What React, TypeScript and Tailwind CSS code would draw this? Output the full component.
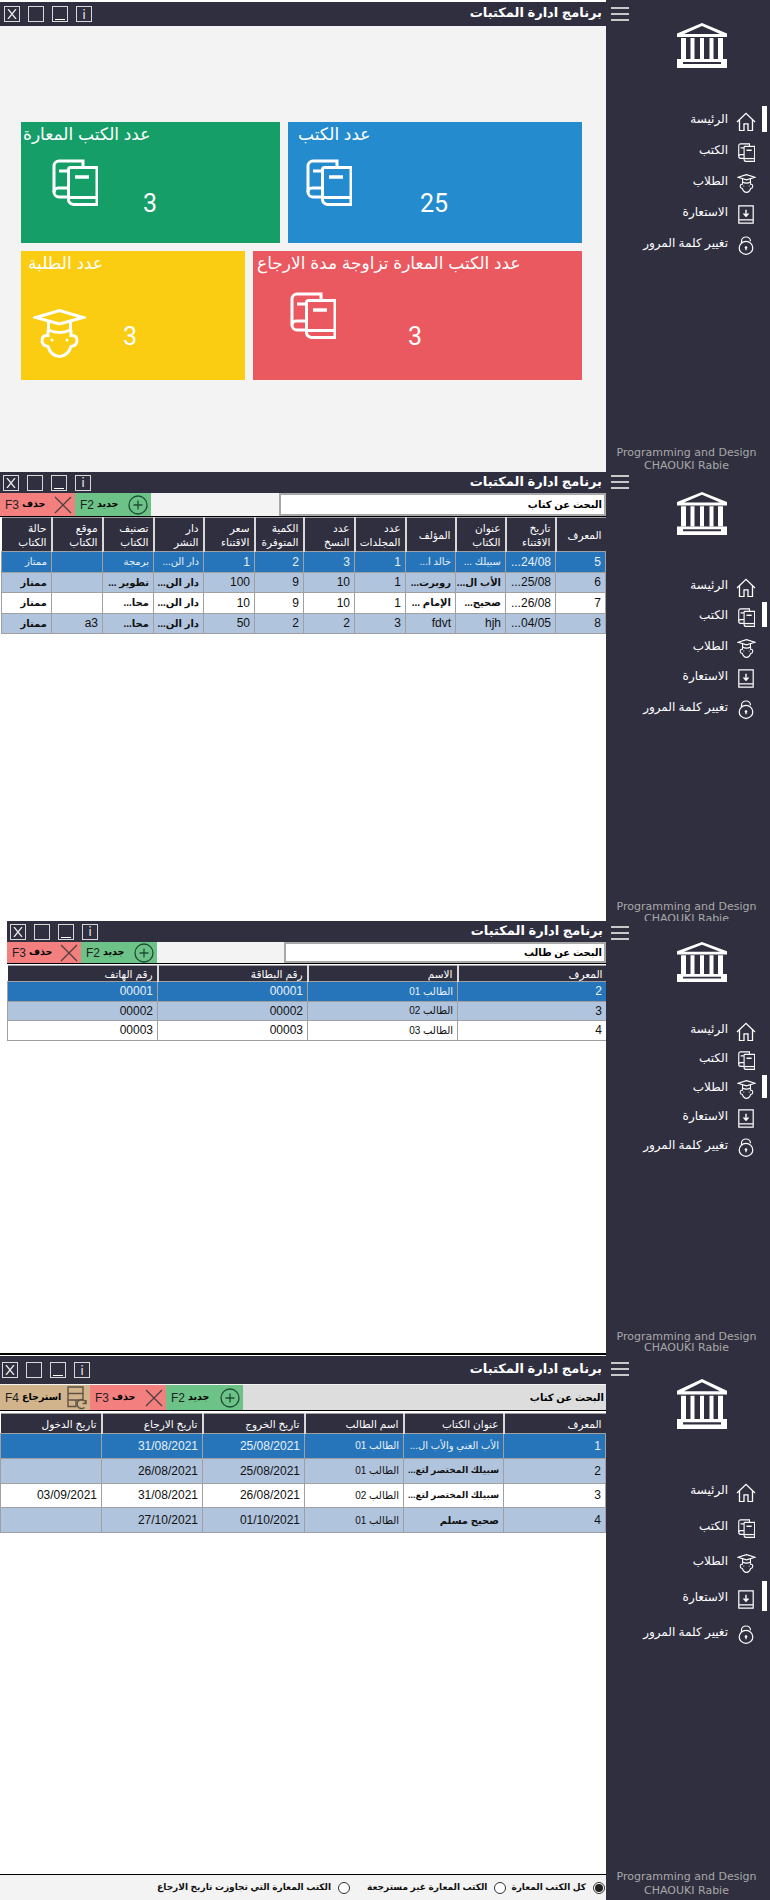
import type { ReactNode } from 'react';

const FONT = "font-['Liberation_Sans','DejaVu_Sans',sans-serif]";

const NAV = [
  { label: 'الرئيسة', icon: <HomeIcon /> },
  { label: 'الكتب', icon: <BooksIcon className="w-[17px] h-full" /> },
  { label: 'الطلاب', icon: <StudentIcon className="w-[19px] h-full" /> },
  { label: 'الاستعارة', icon: <LoanIcon /> },
  { label: 'تغيير كلمة المرور', icon: <LockIcon /> },
];

function BooksIcon({ className = '' }: { className?: string }) {
  return (
    <svg viewBox="0 0 46 47" preserveAspectRatio="none" fill="none" stroke="currentColor" strokeWidth="3" className={className}>
      <path d="M31 8V2H7a5 5 0 0 0-5 5v26a5 5 0 0 0 5 5h9" />
      <path d="M2 33a4 4 0 0 1 4-4h10M7 12h9" />
      <path d="M45 8.500H18.500a2 2 0 0 0-2 2V40a5 5 0 0 0 5 5.500H45z" />
      <path d="M17 38.500h28" />
      <path d="M23 18h14" strokeWidth="3.500" />
    </svg>
  );
}

function StudentIcon({ className = '' }: { className?: string }) {
  return (
    <svg viewBox="0 0 53 49" preserveAspectRatio="none" fill="none" stroke="currentColor" strokeWidth="3" className={className}>
      <path d="M3 8.500 26.500 1.500 50 8.500 26.500 15z" />
      <path d="M15.500 11.500V21q11 5 22 0v-9.500" />
      <path d="M15 21v5.500q-6-.5-6 5 0 5 6 6Q18 47 26.500 47.500 35 47 38 37.500q6-1 6-6 0-5.500-6-5V21" />
      <circle cx="19" cy="31" r="1.500" fill="currentColor" stroke="none" />
      <circle cx="34" cy="31" r="1.500" fill="currentColor" stroke="none" />
    </svg>
  );
}

function HomeIcon() {
  return (
    <svg viewBox="0 0 20 20" preserveAspectRatio="none" fill="none" stroke="currentColor" strokeWidth="1.300" className="w-[20px] h-full">
      <path d="M1 10.500 10 1.500l9 9" />
      <path d="M3.500 8.500V19.500H8v-7h4v7h4.500V8.500" />
    </svg>
  );
}

function LoanIcon() {
  return (
    <svg viewBox="0 0 16 18" preserveAspectRatio="none" fill="none" stroke="currentColor" strokeWidth="1.200" className="w-[16px] h-full">
      <path d="M.800.800h14.400v16.400H.800zM.800 14h14.400" />
      <path d="M8 4.500V10M5.500 8 8 10.500 10.500 8" strokeWidth="1.400" />
    </svg>
  );
}

function LockIcon() {
  return (
    <svg viewBox="0 0 16 20" preserveAspectRatio="none" fill="none" stroke="currentColor" strokeWidth="1.200" className="w-[16px] h-full">
      <circle cx="8" cy="12.500" r="6.800" />
      <path d="M3.500 7.500V5.500a4.500 4.500 0 0 1 9 0" />
      <circle cx="8" cy="12" r="1.300" fill="currentColor" stroke="none" />
      <path d="M8 12v3" />
    </svg>
  );
}

function BankLogo({ className }: { className: string }) {
  return (
    <svg viewBox="0 0 50 45" preserveAspectRatio="none" fill="#ffffff" className={className}>
      <path d="M25 0 50 10.500V14H0v-3.500zM25 3 7 11h36z" fillRule="evenodd" />
      <path d="M4 15h5v21H4zM13.500 15h4v21h-4zM23 15h4v21h-4zM32.500 15h4v21h-4zM41 15h5v21h-5z" />
      <path d="M0 36h50v9H0zM6 39v2h38v-2z" fillRule="evenodd" />
    </svg>
  );
}

function Sidebar({ active, hamburger, logo, nav, row, bar, footer }: {
  active: number;
  hamburger: string;
  logo: string;
  nav: string;
  row: string;
  bar: string;
  footer: string;
}) {
  return (
    <aside className={`flex-1 flex flex-col overflow-hidden bg-[#302f3f] text-white ${hamburger}`}>
      <div className="ml-[5px] w-[18px] flex-none flex flex-col justify-between h-[14px]">
        <span className="h-[2px] bg-[#c8c8c8]" />
        <span className="h-[2px] bg-[#c8c8c8]" />
        <span className="h-[2px] bg-[#c8c8c8]" />
      </div>
      <BankLogo className={`ml-[71px] w-[50px] flex-none ${logo}`} />
      <nav className={`flex flex-col flex-none ${nav}`}>
        {NAV.map((item, i) => (
          <div key={item.label} className={`flex items-center justify-end pr-[3px] ${row}`}>
            <span dir="rtl" className="text-[12px] leading-none mr-[7px] -mt-[5px] whitespace-nowrap">{item.label}</span>
            <span className="w-[22px] h-[19px] flex justify-center">{item.icon}</span>
            <span className={`ml-[5px] w-[5px] -mt-[6px] ${bar} ${i === active ? 'bg-white' : 'bg-transparent'}`} />
          </div>
        ))}
      </nav>
      <div className={`mt-auto flex-none text-center font-['DejaVu_Sans',sans-serif] text-[11px] text-[#a8a8a8] pr-[3px] ${footer}`}>
        <div>Programming and Design</div>
        <div>CHAOUKI Rabie</div>
      </div>
    </aside>
  );
}

function WindowButton({ children }: { children?: ReactNode }) {
  return (
    <div className="w-[16px] h-[16px] border border-[#d8d8d8] flex items-center justify-center text-[#e8e8e8]">
      {children}
    </div>
  );
}

function TitleBar({ className }: { className: string }) {
  return (
    <header className={`flex items-center justify-between flex-none bg-[#302f3f] ${className}`}>
      <div className="flex gap-[8px]">
        <WindowButton>
          <svg viewBox="0 0 10 10" fill="none" stroke="currentColor" strokeWidth="1.300" className="w-[10px] h-[10px]">
            <path d="m1 0 8 10M9 0 1 10" />
          </svg>
        </WindowButton>
        <WindowButton />
        <WindowButton>
          <span className="mt-[11px] w-[10px] h-[1px] bg-white" />
        </WindowButton>
        <WindowButton>
          <span className="text-[13px] leading-none font-['DejaVu_Sans',sans-serif]">i</span>
        </WindowButton>
      </div>
      <h1 dir="rtl" className="text-[13px] font-bold leading-none text-white whitespace-nowrap -mt-[3px]">برنامج ادارة المكتبات</h1>
    </header>
  );
}

function ToolButton({ label, keyName, className, children }: { label: string; keyName: string; className: string; children: ReactNode }) {
  return (
    <div className={`flex items-center justify-between pl-[5px] pr-[3px] h-full flex-none ${className}`}>
      <span className="flex items-center gap-[3px] whitespace-nowrap">
        <span className="text-[12px] text-[#1f1f1f]">{keyName}</span>
        <span className="text-[9.500px] font-bold text-black">{label}</span>
      </span>
      {children}
    </div>
  );
}

const AddIcon = () => (
  <svg viewBox="0 0 20 20" fill="none" stroke="#1d4d35" strokeWidth="1.300" className="w-[20px] h-[20px]">
    <circle cx="10" cy="10" r="9" />
    <path d="M10 5.500v9M5.500 10h9" />
  </svg>
);

const RemoveIcon = () => (
  <svg viewBox="0 0 18 18" fill="none" stroke="#4d4040" strokeWidth="1.300" className="w-[18px] h-[18px]">
    <path d="m1 1 16 16M17 1 1 17" />
  </svg>
);

const RestoreIcon = () => (
  <svg viewBox="0 0 20 24" fill="none" stroke="#5d5344" strokeWidth="1.400" className="w-[20px] h-[24px] flex-none">
    <path d="M1 1h15v6.500H1zM1 7.500h15V14H1zM1 14h8v6.500H1z" />
    <path d="M19 17a4.500 4.500 0 1 0-1.500 4.500M19 14v3.500h-3.500" />
  </svg>
);

function Search({ text, className }: { text: string; className: string }) {
  return (
    <div dir="rtl" className={`flex items-center pr-[2px] text-[10px] font-bold text-black whitespace-nowrap h-full ${className}`}>
      {text}
    </div>
  );
}

type Column = { title: ReactNode; width: string };

const ROW_STYLES = [
  'bg-[#2675ba] text-[#e8f0f8]',
  'bg-[#b0c4de] text-[#111111]',
  'bg-white text-[#111111]',
  'bg-[#b0c4de] text-[#111111]',
];

const ARABIC = /[\u0600-\u06FF]/;

function cellText(cell: string, row: number) {
  if (!ARABIC.test(cell)) return 'text-[12px]';
  if (/\d/.test(cell)) return 'text-[10px]';
  if (row === 0) return 'text-[10px]';
  return cell.length > 14 ? 'text-[9px] font-bold' : 'text-[10px] font-bold';
}

function DataTable({ columns, rows, headClass, rowClass }: {
  columns: Column[];
  rows: string[][];
  headClass: string;
  rowClass: string;
}) {
  return (
    <table dir="rtl" className="table-fixed border-collapse w-full">
      <colgroup>
        {columns.map((c, i) => <col key={i} className={c.width} />)}
      </colgroup>
      <thead>
        <tr className={`bg-[#302f3f] text-white ${headClass}`}>
          {columns.map((c, i) => (
            <th key={i} className="border-l-2 border-l-[#d8d8d8] last:border-l-0 border-y border-y-[#a0a0a0] font-normal text-right pr-[4px] text-[10.500px] leading-[14px] whitespace-nowrap overflow-hidden">
              {c.title}
            </th>
          ))}
        </tr>
      </thead>
      <tbody>
        {rows.map((row, r) => (
          <tr key={r} className={`${ROW_STYLES[r]} ${rowClass}`}>
            {row.map((cell, c) => (
              <td key={c} className={`border border-[#a0a0a0] px-[4px] text-right overflow-hidden whitespace-nowrap ${cellText(cell, r)}`}>
                {cell}
              </td>
            ))}
          </tr>
        ))}
      </tbody>
    </table>
  );
}

function StatCard({ title, titleClass, className, children }: { title: string; titleClass: string; className: string; children: ReactNode }) {
  return (
    <section className={`flex flex-col flex-none text-white ${className}`}>
      <h2 dir="rtl" className={`text-[17px] font-normal leading-[24px] w-max ${titleClass}`}>{title}</h2>
      {children}
    </section>
  );
}

function Count({ value, className }: { value: number; className: string }) {
  return <span className={`font-['Roboto',sans-serif] text-[25px] leading-[26px] ${className}`}>{value}</span>;
}

function Dashboard() {
  return (
    <div className="flex h-[472px] overflow-hidden">
      <main className="w-[606px] flex-none flex flex-col bg-[#f3f3f3]">
        <div className="h-[2px] bg-white flex-none" />
        <TitleBar className="h-[24px] pl-[4px] pr-[4px]" />
        <div className="flex flex-col gap-[8px] pt-[96px] pl-[21px]">
          <div className="flex gap-[8px]">
            <StatCard title="عدد الكتب المعارة" titleClass="ml-[2px] mt-[1px]" className="w-[259px] h-[121px] bg-[#169e68]">
              <div className="flex mt-[12px]">
                <BooksIcon className="ml-[31px] w-[46px] h-[47px]" />
                <Count value={3} className="ml-[45px] mt-[32px]" />
              </div>
            </StatCard>
            <StatCard title="عدد الكتب" titleClass="ml-[10px] mt-[1px]" className="w-[294px] h-[121px] bg-[#258bcf]">
              <div className="flex mt-[12px]">
                <BooksIcon className="ml-[18px] w-[46px] h-[47px]" />
                <Count value={25} className="ml-[68px] mt-[32px]" />
              </div>
            </StatCard>
          </div>
          <div className="flex gap-[8px]">
            <StatCard title="عدد الطلبة" titleClass="ml-[7px] mt-[1px]" className="w-[224px] h-[129px] bg-[#fbcd12]">
              <div className="flex mt-[33px]">
                <StudentIcon className="ml-[12px] w-[53px] h-[49px]" />
                <Count value={3} className="ml-[37px] mt-[15px]" />
              </div>
            </StatCard>
            <StatCard title="عدد الكتب المعارة تزاوجة مدة الارجاع" titleClass="ml-[4px] mt-[1px]" className="w-[329px] h-[129px] bg-[#ea5860]">
              <div className="flex mt-[16px]">
                <BooksIcon className="ml-[37px] w-[46px] h-[47px]" />
                <Count value={3} className="ml-[72px] mt-[32px]" />
              </div>
            </StatCard>
          </div>
        </div>
      </main>
      <Sidebar active={0} hamburger="pt-[7px]" logo="mt-[2px] h-[45px]" nav="mt-[38px]" row="h-[31px]" bar="h-[26px]" footer="leading-[13px]" />
    </div>
  );
}

const BOOK_COLUMNS: Column[] = [
  { title: 'المعرف', width: 'w-[50px]' },
  { title: <>تاريخ<br />الاقتناء</>, width: 'w-[50px]' },
  { title: <>عنوان<br />الكتاب</>, width: 'w-[50px]' },
  { title: 'المؤلف', width: 'w-[50px]' },
  { title: <>عدد<br />المجلدات</>, width: 'w-[51px]' },
  { title: <>عدد<br />النسخ</>, width: 'w-[51px]' },
  { title: <>الكمية<br />المتوفرة</>, width: 'w-[49px]' },
  { title: <>سعر<br />الاقتناء</>, width: 'w-[51px]' },
  { title: <>دار<br />النشر</>, width: 'w-[50px]' },
  { title: <>تصنيف<br />الكتاب</>, width: 'w-[51px]' },
  { title: <>موقع<br />الكتاب</>, width: 'w-[51px]' },
  { title: <>حالة<br />الكتاب</>, width: 'w-[50px]' },
];

const BOOK_ROWS = [
  ['5', '24/08...', 'سبيلك ...', 'خالد ا...', '1', '3', '2', '1', 'دار الن...', 'برمجة', '', 'ممتاز'],
  ['6', '25/08...', 'الأب ال...', 'روبرت...', '1', '10', '9', '100', 'دار الن...', 'تطوير ...', '', 'ممتاز'],
  ['7', '26/08...', 'صحيح...', 'الإمام ...', '1', '10', '9', '10', 'دار الن...', 'محا...', '', 'ممتاز'],
  ['8', '04/05...', 'hjh', 'fdvt', '3', '2', '2', '50', 'دار الن...', 'محا...', 'a3', 'ممتاز'],
];

function Books() {
  return (
    <div className="flex h-[449px] overflow-hidden">
      <main className="w-[606px] flex-none flex flex-col bg-white">
        <TitleBar className="h-[21px] pl-[3px] pr-[4px]" />
        <div className="flex h-[24px] flex-none bg-[#f3f3f3] border-b border-black">
          <ToolButton label="حذف" keyName="F3" className="w-[75px] bg-[#f47f7f]"><RemoveIcon /></ToolButton>
          <ToolButton label="جديد" keyName="F2" className="w-[76px] bg-[#6cc287]"><AddIcon /></ToolButton>
          <Search text="البحث عن كتاب" className="ml-auto w-[327px] bg-white border-2 border-[#a8a8a8]" />
        </div>
        <div className="ml-[1px] w-[603px]">
          <DataTable columns={BOOK_COLUMNS} rows={BOOK_ROWS} headClass="h-[34px]" rowClass="h-[20.500px]" />
        </div>
      </main>
      <Sidebar active={1} hamburger="pt-[3px]" logo="mt-[3px] h-[43px]" nav="mt-[37px]" row="h-[30.500px]" bar="h-[25px]" footer="leading-[11.500px] -mb-[3px]" />
    </div>
  );
}

const STUDENT_COLUMNS: Column[] = [
  { title: 'المعرف', width: 'w-[149px]' },
  { title: 'الاسم', width: 'w-[150px]' },
  { title: 'رقم البطاقة', width: 'w-[150px]' },
  { title: 'رقم الهاتف', width: 'w-[150px]' },
];

const STUDENT_ROWS = [
  ['2', 'الطالب 01', '00001', '00001'],
  ['3', 'الطالب 02', '00002', '00002'],
  ['4', 'الطالب 03', '00003', '00003'],
];

function Students() {
  return (
    <div className="flex h-[432px] overflow-hidden">
      <main className="w-[606px] flex-none flex flex-col bg-white pl-[7px]">
        <TitleBar className="h-[21px] pl-[3px] pr-[3px]" />
        <div className="flex h-[22px] flex-none bg-[#f3f3f3] border-b border-black">
          <ToolButton label="حذف" keyName="F3" className="w-[74px] bg-[#f47f7f]"><RemoveIcon /></ToolButton>
          <ToolButton label="جديد" keyName="F2" className="w-[76px] bg-[#6cc287]"><AddIcon /></ToolButton>
          <Search text="البحث عن طالب" className="ml-auto w-[322px] bg-white border-2 border-[#a8a8a8]" />
        </div>
        <div className="mt-[1px]">
          <DataTable columns={STUDENT_COLUMNS} rows={STUDENT_ROWS} headClass="h-[16px]" rowClass="h-[19.500px]" />
        </div>
      </main>
      <Sidebar active={2} hamburger="pt-[5px]" logo="mt-[2px] h-[40px]" nav="mt-[35px]" row="h-[29px]" bar="h-[23px]" footer="leading-[11px]" />
    </div>
  );
}

const LOAN_COLUMNS: Column[] = [
  { title: 'المعرف', width: 'w-[102px]' },
  { title: 'عنوان الكتاب', width: 'w-[100px]' },
  { title: 'اسم الطالب', width: 'w-[99px]' },
  { title: 'تاريخ الخروج', width: 'w-[102px]' },
  { title: 'تاريخ الارجاع', width: 'w-[101px]' },
  { title: 'تاريخ الدخول', width: 'w-[101px]' },
];

const LOAN_ROWS = [
  ['1', 'الأب الغني والأب ال...', 'الطالب 01', '25/08/2021', '31/08/2021', ''],
  ['2', 'سبيلك المختصر لتع...', 'الطالب 01', '25/08/2021', '26/08/2021', ''],
  ['3', 'سبيلك المختصر لتع...', 'الطالب 02', '26/08/2021', '31/08/2021', '03/09/2021'],
  ['4', 'صحيح مسلم', 'الطالب 01', '01/10/2021', '27/10/2021', ''],
];

const FILTERS = [
  { label: 'كل الكتب المعارة', gap: 'ml-[5px]' },
  { label: 'الكتب المعارة غير مسترجعة', gap: 'ml-[17px]' },
  { label: 'الكتب المعارة التي تجاوزت تاريخ الارجاع', gap: '' },
];

function Loans() {
  return (
    <div className="flex h-[547px] overflow-hidden">
      <main className="w-[606px] flex-none flex flex-col bg-white">
        <div className="h-[2px] bg-black flex-none" />
        <div className="h-[1px] bg-white flex-none" />
        <TitleBar className="h-[28px] pl-[2px] pr-[4px]" />
        <div className="flex h-[27px] flex-none bg-[#f3f3f3] pt-[1px] border-b border-black">
          <ToolButton label="استرجاع" keyName="F4" className="w-[90px] bg-[#d2b48c]"><RestoreIcon /></ToolButton>
          <ToolButton label="حذف" keyName="F3" className="w-[76px] bg-[#f47f7f]"><RemoveIcon /></ToolButton>
          <ToolButton label="جديد" keyName="F2" className="w-[77px] bg-[#6cc287]"><AddIcon /></ToolButton>
          <Search text="البحث عن كتاب" className="flex-1 bg-[#dcdddc]" />
        </div>
        <div className="mt-[2px] w-[605px]">
          <DataTable columns={LOAN_COLUMNS} rows={LOAN_ROWS} headClass="h-[20px]" rowClass="h-[24.750px]" />
        </div>
        <div dir="rtl" className="mt-auto h-[26px] flex-none flex items-center bg-[#f3f3f3] border-t border-black pr-[1px] text-[9px] font-bold text-[#111111]">
          {FILTERS.map((filter, i) => (
            <label key={filter.label} className={`flex items-center gap-[7px] whitespace-nowrap ${filter.gap}`}>
              <span className="w-[12px] h-[12px] rounded-full border border-[#333333] bg-white flex items-center justify-center">
                {i === 0 && <span className="w-[8px] h-[8px] rounded-full bg-[#222222]" />}
              </span>
              {filter.label}
            </label>
          ))}
        </div>
      </main>
      <Sidebar active={3} hamburger="pt-[9px]" logo="mt-[3px] h-[50px]" nav="mt-[46px]" row="h-[35.500px]" bar="h-[30px]" footer="leading-[14px] pb-[2px]" />
    </div>
  );
}

export default function App() {
  return (
    <div className={`w-[770px] h-[1900px] overflow-hidden bg-white ${FONT}`}>
      <Dashboard />
      <Books />
      <Students />
      <Loans />
    </div>
  );
}
